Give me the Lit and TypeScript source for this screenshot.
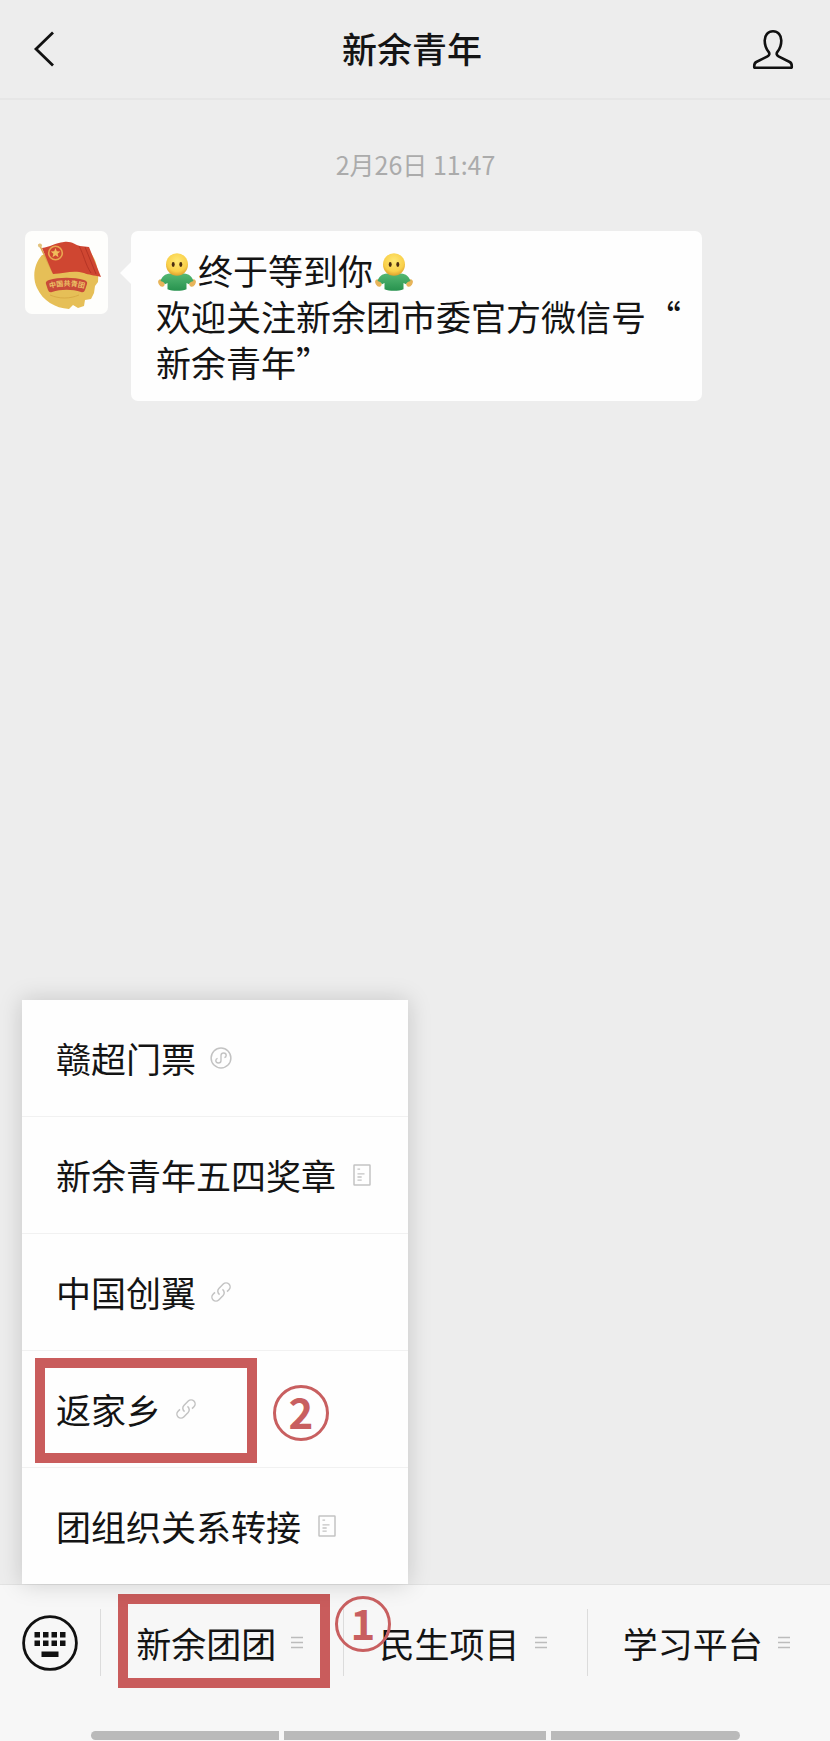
import { LitElement, html, css, svg, nothing } from "lit";
import { customElement, property, state } from "lit/decorators.js";

type LinkKind = "mini" | "doc" | "link";

interface MenuEntry {
  label: string;
  kind: LinkKind;
  step?: number;
}

const ENTRIES: MenuEntry[] = [
  { label: "赣超门票", kind: "mini" },
  { label: "新余青年五四奖章", kind: "doc" },
  { label: "中国创翼", kind: "link" },
  { label: "返家乡", kind: "link", step: 2 },
  { label: "团组织关系转接", kind: "doc" },
];

const TABS = [
  { label: "新余团团", step: 1 },
  { label: "民生项目" },
  { label: "学习平台" },
];

const KIND_ART = {
  mini: svg`
    <circle cx="11" cy="11" r="9.9"></circle>
    <path d="M7.600 11.300a2.500 2.500 0 0 0-1.800 2.300c0 1.500 1.200 2.400 2.600 2.400s2.600-1 2.600-2.500v-5C11 7 12.200 6 13.600 6s2.600.9 2.600 2.400a2.500 2.500 0 0 1-1.800 2.300" stroke-width="1.400"></path>`,
  doc: svg`
    <rect x="4" y="1" width="16" height="20" rx="0.5"></rect>
    <path d="M7.500 5.200h2.600M7.500 9.800h7M7.500 13h4.200M7.500 16.200h4.200" stroke-width="1.300"></path>`,
  link: svg`
    <g transform="rotate(-45 11 11)">
      <path d="M8.200 11.800A4 4 0 0 1 12 7h6.200a4 4 0 0 1 0 8H15.500"></path>
      <path d="M13.800 10.200A4 4 0 0 1 10 15H3.800a4 4 0 0 1 0-8H6.500"></path>
    </g>`,
};

@customElement("step-badge")
class StepBadge extends LitElement {
  @property({ type: Number }) step = 1;

  static styles = css`
    :host {
      box-sizing: border-box;
      width: 56px;
      height: 56px;
      border: 3px solid #c85f60;
      border-radius: 50%;
      display: flex;
      justify-content: center;
      color: #c85f60;
      font: 700 42px/46px "Noto Sans CJK SC", sans-serif;
      pointer-events: none;
    }
  `;

  render() {
    return html`${this.step}`;
  }
}

@customElement("face-emoji")
class FaceEmoji extends LitElement {
  static styles = css`
    :host {
      display: inline-block;
      width: 38px;
      height: 38px;
      margin: 0 2px;
      vertical-align: -6px;
    }
    .art {
      display: block;
    }
  `;

  render() {
    return html`<svg class="art" width="38" height="38" viewBox="0 0 38 38" role="img" aria-label="表情">
      <defs>
        <radialGradient id="face" cx=".5" cy=".35" r=".65">
          <stop offset="0" stop-color="#ffe873"></stop>
          <stop offset=".7" stop-color="#f9d04a"></stop>
          <stop offset="1" stop-color="#dda02d"></stop>
        </radialGradient>
        <linearGradient id="body" x1="0" y1="0" x2="0" y2="1">
          <stop offset="0" stop-color="#55b873"></stop>
          <stop offset="1" stop-color="#27924e"></stop>
        </linearGradient>
      </defs>
      <ellipse cx="3.400" cy="30" rx="2.800" ry="4" fill="#e7b45a" transform="rotate(-30 3.400 30)"></ellipse>
      <ellipse cx="34.600" cy="30" rx="2.800" ry="4" fill="#e7b45a" transform="rotate(30 34.600 30)"></ellipse>
      <path d="M12 20.500c-5 .4-8 3-9.500 7.500 2 .4 3.800 1.400 4.500 3.200l2.500-1.200v6.200c5 2.200 14 2.200 19 0V30l2.500 1.200c.7-1.800 2.500-2.800 4.500-3.200-1.500-4.500-4.500-7.100-9.500-7.500z" fill="url(#body)"></path>
      <ellipse cx="19" cy="11.500" rx="11" ry="11.300" fill="url(#face)"></ellipse>
      <ellipse cx="15.200" cy="11.500" rx="1.500" ry="2.400" fill="#4b2d12"></ellipse>
      <ellipse cx="22.800" cy="11.500" rx="1.500" ry="2.400" fill="#4b2d12"></ellipse>
    </svg>`;
  }
}

@customElement("league-emblem")
class LeagueEmblem extends LitElement {
  static styles = css`
    :host {
      display: block;
      flex: none;
      width: 83px;
      height: 83px;
      border-radius: 7px;
      background: #fefefc;
      overflow: hidden;
    }
    .art {
      display: block;
    }
    .motto {
      font: 700 7px "Noto Sans CJK SC", sans-serif;
      fill: #ecc265;
    }
  `;

  render() {
    return html`<svg class="art" width="83" height="83" viewBox="0 0 83 83" role="img" aria-label="团徽">
      <path d="M17 24C9 33 7 46 12 57c6 13 18 20 32 21l4-4 5 3 6-2 1-6 6-1 3-6 1-7 3-4c1-12-2-24-9-31z" fill="#e6bf57"></path>
      <path d="M25 64c9 4 20 4 29 0" fill="none" stroke="#d9ab45" stroke-width="1"></path>
      <path d="M14 13l14 29" stroke="#dba84c" stroke-width="1.500"></path>
      <circle cx="15" cy="14.500" r="2" fill="#e3c27c"></circle>
      <path d="M17 17c8-1 13-5 22-6 8-1 11 3 16 4l9 1 12 30c-8-2-12-2-17-4-10-3-19 0-31 1C24 34 21 26 17 17z" fill="#cf4631"></path>
      <path d="M54 15c5 9 6 18 12 27M60 16l11 27" fill="none" stroke="#b53526" stroke-width="1"></path>
      <circle cx="30.500" cy="22" r="6.800" fill="none" stroke="#e9a650" stroke-width="1.600"></circle>
      <path d="M30.500 17l1.300 3.300 3.500.200-2.700 2.200.9 3.500-3-1.900-3 1.900.9-3.500-2.700-2.200 3.500-.200z" fill="#f0bc5b"></path>
      <path d="M24 49c10-3 25-3 35 0q4 1.500 3 4l-2 6q-1 3-4 2c-9-3-20-3-29 0q-3 1-4-2l-2-6q-1-2.500 3-4z" fill="#c94b39"></path>
      <path id="arc" d="M23 58q18.500-6 38 0" fill="none"></path>
      <text class="motto" text-anchor="middle"><textPath href="#arc" startOffset="50%">中国共青团</textPath></text>
    </svg>`;
  }
}

@customElement("app-root")
class AppRoot extends LitElement {
  @state() private menuOpen = true;

  static styles = css`
    :host {
      display: flex;
      flex-direction: column;
      min-height: 100vh;
      background: #ededed;
      color: #141414;
      font-family: "Noto Sans CJK SC", sans-serif;
      font-size: 35px;
      line-height: 46px;
    }
    button {
      border: 0;
      margin: 0;
      padding: 0;
      background: none;
      color: inherit;
      font: inherit;
      cursor: pointer;
    }
    svg {
      display: block;
      flex: none;
    }
    .header {
      display: grid;
      grid-template-columns: 1fr auto 1fr;
      align-items: center;
      height: 98px;
      padding: 0 34px 0 28px;
      border-bottom: 2px solid #e6e6e6;
    }
    .title {
      margin: 0;
      padding-bottom: 2px;
      font-size: 35px;
      font-weight: 500;
    }
    .profile {
      justify-self: end;
    }
    .chat {
      flex: 1;
      padding: 41px 24px 0 25px;
    }
    .time {
      margin: 0 0 44px;
      text-align: center;
      color: #ababab;
      font-size: 25px;
    }
    .message {
      display: flex;
      align-items: flex-start;
      gap: 23px;
    }
    .bubble {
      position: relative;
      padding: 16px 21px 16px 25px;
      border-radius: 7px;
      background: #fefefe;
    }
    .bubble::before {
      content: "";
      position: absolute;
      left: -11px;
      top: 31px;
      border: 11px solid transparent;
      border-left-width: 0;
      border-right-color: #fefefe;
    }
    .line {
      margin: 0;
    }
    .opening {
      height: 46px;
    }
    .footer {
      position: relative;
      border-top: 1px solid #e2e2e2;
      background: #f7f7f7;
    }
    .menu {
      position: absolute;
      left: 22px;
      bottom: 100%;
      width: 386px;
      margin: 0 0 1px;
      padding: 0;
      list-style: none;
      background: #fefefe;
      box-shadow: 0 0 22px rgba(0, 0, 0, 0.17);
    }
    .entry {
      position: relative;
    }
    .entry + .entry {
      border-top: 1px solid #f1f1f1;
    }
    .entry-button {
      display: flex;
      align-items: center;
      gap: 14px;
      width: 100%;
      height: 116px;
      padding: 0 34px;
      text-align: left;
      white-space: nowrap;
    }
    .frame {
      position: absolute;
      box-sizing: border-box;
      border: 10px solid #c95c5c;
      pointer-events: none;
    }
    .entry-frame {
      left: 13px;
      top: 7px;
      width: 222px;
      height: 105px;
    }
    .entry-step {
      position: absolute;
      left: 251px;
      top: 34px;
    }
    .bar {
      display: flex;
      padding: 24px 0 55px;
      position: relative;
    }
    .keyboard {
      flex: none;
      width: 100px;
      display: grid;
      place-items: center;
    }
    .tab {
      position: relative;
      flex: 1;
      height: 67px;
      border-left: 1px solid #dcdcdc;
    }
    .tab-button {
      display: flex;
      align-items: center;
      justify-content: center;
      gap: 14px;
      width: 100%;
      height: 100%;
      padding-right: 4px;
      white-space: nowrap;
    }
    .tab-frame {
      left: 17px;
      top: -15px;
      width: 212px;
      height: 94px;
    }
    .tab-step {
      position: absolute;
      z-index: 1;
      left: 234px;
      top: -13px;
    }
    .tracks {
      display: grid;
      grid-template-columns: 188fr 261fr 189fr;
      gap: 5px;
      padding: 0 90px 1px 91px;
    }
    .track {
      height: 9px;
      background: #bababa;
    }
    .track:first-child {
      border-radius: 5px 0 0 5px;
    }
    .track:last-child {
      border-radius: 0 5px 5px 0;
    }
  `;

  private renderEntry(entry: MenuEntry) {
    return html`<li class="entry">
      <button class="entry-button" type="button">
        <span>${entry.label}</span>
        <svg width="22" height="22" viewBox="0 0 22 22" fill="none" stroke="#c3c3c3" stroke-width="1.500" aria-hidden="true">
          ${KIND_ART[entry.kind]}
        </svg>
      </button>
      ${entry.step
        ? html`<span class="frame entry-frame"></span>
            <step-badge class="entry-step" .step=${entry.step}></step-badge>`
        : nothing}
    </li>`;
  }

  private renderTab(tab: { label: string; step?: number }) {
    return html`<div class="tab">
      <button class="tab-button" type="button" @click=${() => this.toggle(tab.step)}>
        <span>${tab.label}</span>
        <svg width="14" height="14" viewBox="0 0 14 14" stroke="#bcbcbc" stroke-width="1.500" aria-hidden="true">
          <path d="M1 1.500h12M1 6.500h12M1 11.500h12"></path>
        </svg>
      </button>
      ${tab.step
        ? html`<span class="frame tab-frame"></span>
            <step-badge class="tab-step" .step=${tab.step}></step-badge>`
        : nothing}
    </div>`;
  }

  private toggle(step?: number) {
    this.menuOpen = step ? !this.menuOpen : false;
  }

  render() {
    return html`
      <header class="header">
        <button type="button" aria-label="返回">
          <svg width="28" height="38" viewBox="0 0 28 38" fill="none" stroke="#111" stroke-width="2.800" aria-hidden="true">
            <path d="M25 2.500L8 19l17 16.500"></path>
          </svg>
        </button>
        <h1 class="title">新余青年</h1>
        <button class="profile" type="button" aria-label="公众号资料">
          <svg width="46" height="42" viewBox="0 0 46 42" fill="none" stroke="#111" stroke-width="2.600" stroke-linejoin="round" aria-hidden="true">
            <path d="M23 3.300c-5 0-8.300 4-8.300 9.300 0 5 1.700 8.700 3.900 11.300 1.300 1.700.8 3.500-1.100 4.500L6.300 34c-2 1-2.300 3-2 5.700h37.400c.3-2.700 0-4.700-2-5.700l-11.200-5.600c-1.900-1-2.400-2.800-1.100-4.500 2.200-2.600 3.900-6.300 3.900-11.300 0-5.300-3.300-9.300-8.300-9.300z"></path>
          </svg>
        </button>
      </header>

      <main class="chat">
        <p class="time">2月26日 11:47</p>
        <article class="message">
          <league-emblem></league-emblem>
          <div class="bubble">
            <p class="line opening"><face-emoji></face-emoji>终于等到你<face-emoji></face-emoji></p>
            <p class="line">欢迎关注新余团市委官方微信号“<br />新余青年”</p>
          </div>
        </article>
      </main>

      <footer class="footer">
        <nav class="bar">
          <button class="keyboard" type="button" aria-label="键盘">
            <svg width="56" height="56" viewBox="0 0 56 56" fill="#111" aria-hidden="true">
              <circle cx="28" cy="28" r="26.400" fill="none" stroke="#111" stroke-width="2.800"></circle>
              <path d="M12.500 17h5.500v5.500h-5.500zM21 17h5.500v5.500H21zM29.500 17H35v5.500h-5.500zM38 17h5.500v5.500H38zM12.500 25.500h5.500V31h-5.500zM21 25.500h5.500V31H21zM29.500 25.500H35V31h-5.500zM38 25.500h5.500V31H38zM19.500 36.500h17V42h-17z"></path>
            </svg>
          </button>
          ${TABS.map((tab) => this.renderTab(tab))}
        </nav>
        <div class="tracks" aria-hidden="true">
          <span class="track"></span><span class="track"></span><span class="track"></span>
        </div>
        ${this.menuOpen
          ? html`<ul class="menu">${ENTRIES.map((entry) => this.renderEntry(entry))}</ul>`
          : nothing}
      </footer>
    `;
  }
}
